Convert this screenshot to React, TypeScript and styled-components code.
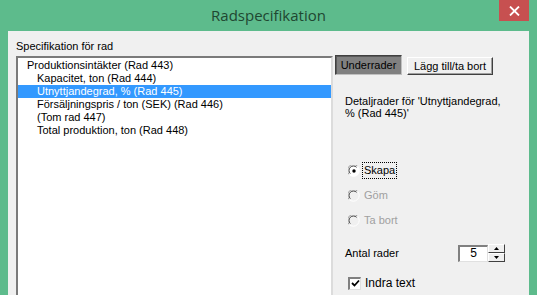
import React from "react";
import styled, { createGlobalStyle } from "styled-components";

const rows = [
  { label: "Produktionsintäkter (Rad 443)", level: 0 },
  { label: "Kapacitet, ton (Rad 444)", level: 1 },
  { label: "Utnyttjandegrad, % (Rad 445)", level: 1, selected: true },
  { label: "Försäljningspris / ton (SEK) (Rad 446)", level: 1 },
  { label: "(Tom rad 447)", level: 1 },
  { label: "Total produktion, ton (Rad 448)", level: 1 },
];

const RadioMark = ({ checked, disabled }: { checked?: boolean; disabled?: boolean }) => (
  <svg width="12" height="12" viewBox="0 0 12 12">
    <circle cx="6" cy="6" r="5.5" fill={disabled ? "#f0f0f0" : "#ffffff"} />
    <path d="M1.2 9.5 A5.3 5.3 0 0 1 9.5 1.2" fill="none" stroke="#a0a0a0" strokeWidth="1" />
    <path d="M2.3 8.6 A4.2 4.2 0 0 1 8.6 2.3" fill="none" stroke="#404040" strokeWidth="1" />
    <path d="M9.5 1.2 A5.3 5.3 0 0 1 1.2 9.5" fill="none" stroke="#ffffff" strokeWidth="1" />
    {checked && <circle cx="6" cy="6" r="1.7" fill="#000" />}
  </svg>
);

const App = () => {
  return (
    <>
      <GlobalStyle />
      <Frame>
        <TitleBar>
          <span />
          <Title>Radspecifikation</Title>
          <CloseButton>
            <svg width="11" height="10" viewBox="0 0 11 10">
              <path d="M1 0.5 L10 9.5 M10 0.5 L1 9.5" stroke="#fff" strokeWidth="1.8" />
            </svg>
          </CloseButton>
        </TitleBar>
        <Client>
          <LeftCol>
            <Label>Specifikation för rad</Label>
            <ListBox>
              {rows.map((r) => (
                <ListRow key={r.label} level={r.level} selected={r.selected}>
                  {r.label}
                </ListRow>
              ))}
            </ListBox>
          </LeftCol>
          <RightCol>
            <TabRow>
              <TabButton pressed>Underrader</TabButton>
              <TabButton>Lägg till/ta bort</TabButton>
            </TabRow>
            <Description>
              Detaljrader för 'Utnyttjandegrad,
              <br />% (Rad 445)'
            </Description>
            <Options>
              <Option>
                <RadioMark checked />
                <OptionText focused>Skapa</OptionText>
              </Option>
              <Option disabled>
                <RadioMark disabled />
                <OptionText>Göm</OptionText>
              </Option>
              <Option disabled>
                <RadioMark disabled />
                <OptionText>Ta bort</OptionText>
              </Option>
            </Options>
            <CountRow>
              <span>Antal rader</span>
              <Spinner>
                <SpinInput>5</SpinInput>
                <SpinButtons>
                  <SpinButton>
                    <svg width="5" height="3" viewBox="0 0 5 3">
                      <path d="M2.5 0 L5 3 L0 3 Z" fill="#000" />
                    </svg>
                  </SpinButton>
                  <SpinButton>
                    <svg width="5" height="3" viewBox="0 0 5 3">
                      <path d="M0 0 L5 0 L2.5 3 Z" fill="#000" />
                    </svg>
                  </SpinButton>
                </SpinButtons>
              </Spinner>
            </CountRow>
            <CheckRow>
              <CheckBox>
                <svg width="9" height="9" viewBox="0 0 9 9">
                  <path d="M1 4 L3.5 6.5 L8 1.5" fill="none" stroke="#000" strokeWidth="1.8" />
                </svg>
              </CheckBox>
              <span>Indra text</span>
            </CheckRow>
          </RightCol>
        </Client>
      </Frame>
    </>
  );
};

export default App;

const GlobalStyle = createGlobalStyle`
  html, body {
    margin: 0;
    padding: 0;
    overflow: hidden;
    background: #5dbb8c;
  }
  body {
    width: 537px;
    height: 295px;
    font-family: "Liberation Sans", Arial, sans-serif;
  }
`;

const Frame = styled.div`
  display: flex;
  flex-direction: column;
  width: 537px;
  height: 400px;
  background-color: #5dbb8c;
`;

const TitleBar = styled.div`
  display: grid;
  grid-template-columns: 1fr auto 1fr;
  height: 31px;
  padding-right: 8px;
`;

const Title = styled.span`
  font-family: "Open Sans", "Noto Sans", sans-serif;
  font-size: 15px;
  color: #1f4731;
  line-height: 30px;
  padding-left: 8px;
`;

const CloseButton = styled.div`
  justify-self: end;
  align-self: start;
  display: flex;
  align-items: center;
  justify-content: center;
  width: 30px;
  height: 21px;
  background-color: #c75050;
`;

const Client = styled.div`
  flex: 1;
  display: flex;
  flex-direction: row;
  margin: 0 8px;
  background-color: #f0f0f0;
  font-size: 11px;
  color: #000;
`;

const LeftCol = styled.div`
  display: flex;
  flex-direction: column;
  padding: 9px 0 0 8px;
`;

const Label = styled.div`
  line-height: 13px;
  margin-bottom: 3px;
`;

const ListBox = styled.div`
  width: 313px;
  flex: 1;
  background: #fff;
  border-top: 2px solid #7a7a7a;
  border-left: 2px solid #7a7a7a;
  border-right: 2px solid #dcdcdc;
  border-bottom: 2px solid #dcdcdc;
  padding-top: 1px;
`;

const ListRow = styled.div<{ level: number; selected?: boolean }>`
  height: 13px;
  line-height: 13px;
  padding-left: ${(p) => 9 + p.level * 10}px;
  background: ${(p) => (p.selected ? "#3399ff" : "transparent")};
  color: ${(p) => (p.selected ? "#fff" : "#000")};
  white-space: nowrap;
`;

const RightCol = styled.div`
  display: flex;
  flex-direction: column;
  padding: 24px 0 0 2px;
`;

const TabRow = styled.div`
  display: flex;
  align-items: flex-end;
  gap: 5px;
`;

const TabButton = styled.div<{ pressed?: boolean }>`
  box-sizing: border-box;
  display: flex;
  align-items: center;
  justify-content: center;
  height: ${(p) => (p.pressed ? 20 : 18)}px;
  width: ${(p) => (p.pressed ? 67 : 86)}px;
  background: ${(p) => (p.pressed ? "#808080" : "#f0f0f0")};
  border-top: 1px solid ${(p) => (p.pressed ? "#404040" : "#ffffff")};
  border-left: 1px solid ${(p) => (p.pressed ? "#404040" : "#ffffff")};
  border-right: 1px solid ${(p) => (p.pressed ? "#c0c0c0" : "#404040")};
  border-bottom: 1px solid ${(p) => (p.pressed ? "#c0c0c0" : "#404040")};
  box-shadow: ${(p) =>
    p.pressed ? "inset 1px 1px 0 #5a5a5a" : "inset -1px -1px 0 #a0a0a0"};
`;

const Description = styled.div`
  margin: 20px 0 0 10px;
  line-height: 12px;
`;

const Options = styled.div`
  display: flex;
  flex-direction: column;
  gap: 12px;
  margin: 45px 0 0 13px;
`;

const Option = styled.div<{ disabled?: boolean }>`
  display: flex;
  align-items: center;
  gap: 3px;
  height: 13px;
  color: ${(p) => (p.disabled ? "#a0a0a0" : "#000")};
`;

const OptionText = styled.span<{ focused?: boolean }>`
  padding: 1px 1px;
  line-height: 13px;
  outline: ${(p) => (p.focused ? "1px dotted #000" : "none")};
`;

const CountRow = styled.div`
  display: flex;
  align-items: center;
  justify-content: space-between;
  width: 160px;
  margin: 17px 0 0 10px;
`;

const Spinner = styled.div`
  display: flex;
  align-items: center;
`;

const SpinInput = styled.div`
  box-sizing: border-box;
  width: 30px;
  height: 17px;
  line-height: 13px;
  text-align: center;
  background: #fff;
  border-top: 2px solid #808080;
  border-left: 2px solid #808080;
  border-right: 1px solid #e0e0e0;
  border-bottom: 1px solid #e0e0e0;
  font-size: 12px;
`;

const SpinButtons = styled.div`
  display: flex;
  flex-direction: column;
`;

const SpinButton = styled.div`
  box-sizing: border-box;
  display: flex;
  align-items: center;
  justify-content: center;
  width: 17px;
  height: 9px;
  background: #f0f0f0;
  border-top: 1px solid #ffffff;
  border-left: 1px solid #ffffff;
  border-right: 1px solid #404040;
  border-bottom: 1px solid #404040;
`;

const CheckRow = styled.div`
  display: flex;
  align-items: center;
  gap: 4px;
  margin: 14px 0 0 13px;
  font-size: 12px;
`;

const CheckBox = styled.div`
  box-sizing: border-box;
  display: flex;
  align-items: center;
  justify-content: center;
  width: 13px;
  height: 13px;
  background: #fff;
  border-top: 2px solid #808080;
  border-left: 2px solid #808080;
  border-right: 1px solid #e0e0e0;
  border-bottom: 1px solid #e0e0e0;
`;
